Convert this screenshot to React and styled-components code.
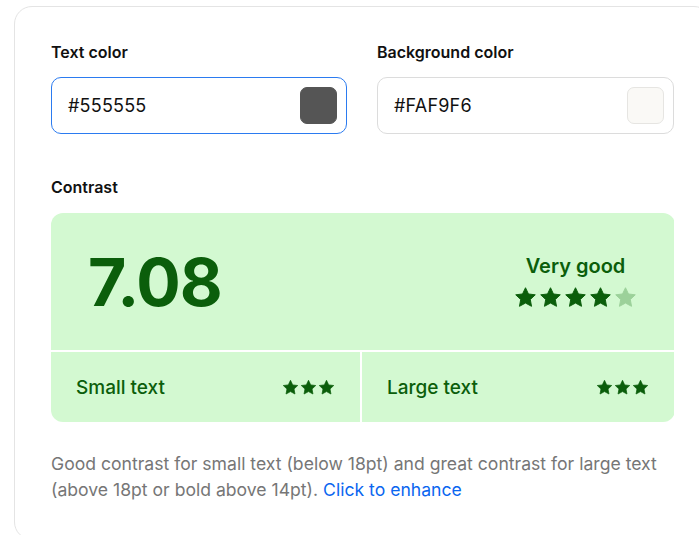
import React from "react";
import styled, { createGlobalStyle } from "styled-components";

const GlobalStyle = createGlobalStyle`
  html, body {
    margin: 0;
    padding: 0;
    background: #ffffff;
    overflow: hidden;
  }
  body {
    font-family: Inter, "Noto Sans", "Liberation Sans", sans-serif;
    color: #111;
  }
`;

const Page = styled.div`
  padding: 6px 0 0 14px;
`;

const Card = styled.div`
  box-sizing: border-box;
  width: 698px;
  border: 1px solid #e4e4e4;
  border-radius: 18px;
  padding: 35px 36px 36px;
  background: #fff;
`;

const Fields = styled.div`
  display: grid;
  grid-template-columns: 296px 297px;
  column-gap: 30px;
`;

const Field = styled.div`
  display: flex;
  flex-direction: column;
  gap: 15px;
`;

const Label = styled.div`
  font-size: 16px;
  line-height: 20px;
  font-weight: 600;
  color: #111;
`;

const InputBox = styled.div`
  box-sizing: border-box;
  height: 57px;
  display: flex;
  align-items: center;
  justify-content: space-between;
  padding: 0 9px 0 16px;
  border-radius: 10px;
  border: ${(p) => (p.$focused ? "1.5px solid #2b7bf0" : "1px solid #dcdcdc")};
  background: #fff;
`;

const HexValue = styled.span`
  font-size: 18px;
  color: #111;
  letter-spacing: 0.2px;
`;

const Swatch = styled.span`
  box-sizing: border-box;
  width: 37px;
  height: 37px;
  border-radius: 7px;
  background: ${(p) => p.$color};
  border: 1px solid ${(p) => (p.$light ? "#e6e5e2" : p.$color)};
`;

const ContrastSection = styled.div`
  margin-top: 43px;
  display: flex;
  flex-direction: column;
  gap: 16px;
`;

const ResultGrid = styled.div`
  display: grid;
  grid-template-columns: 309px 312px;
  grid-template-rows: 137px 70px;
  gap: 2px;
  border-radius: 12px;
  overflow: hidden;
  background: #fff;
`;

const Cell = styled.div`
  background: #d3f9d1;
  color: #0b5e0b;
  display: flex;
  align-items: center;
  justify-content: space-between;
`;

const Summary = styled(Cell)`
  grid-column: 1 / span 2;
  padding: 0 37px;
`;

const Ratio = styled.div`
  font-size: 66px;
  font-weight: 700;
  letter-spacing: -1px;
  line-height: 1;
`;

const Verdict = styled.div`
  display: flex;
  flex-direction: column;
  align-items: center;
  gap: 8px;
`;

const VerdictText = styled.div`
  font-size: 20px;
  font-weight: 600;
  line-height: 24px;
`;

const Stars = styled.div`
  display: flex;
  gap: ${(p) => p.$gap}px;
`;

const Detail = styled(Cell)`
  padding: 0 25px;
`;

const DetailText = styled.div`
  font-size: 19px;
  font-weight: 500;
`;

const Note = styled.p`
  margin: 29px 0 0;
  font-size: 17.6px;
  line-height: 26px;
  color: #767676;
`;

const Link = styled.a`
  color: #0a66f0;
  text-decoration: none;
  cursor: pointer;
`;

const Star = ({ size, faded }) => (
  <svg width={size} height={size} viewBox="0 0 24 24">
    <polygon
      points="12,1.8 15.1,8.3 22.2,9.2 17,14.1 18.3,21.2 12,17.8 5.7,21.2 7,14.1 1.8,9.2 8.9,8.3"
      fill={faded ? "#9cd19a" : "#0b5e0b"}
      stroke={faded ? "#9cd19a" : "#0b5e0b"}
      strokeWidth="1"
      strokeLinejoin="round"
    />
  </svg>
);

const StarRow = ({ count, filled, size, gap }) => (
  <Stars $gap={gap}>
    {Array.from({ length: count }).map((_, i) => (
      <Star key={i} size={size} faded={i >= filled} />
    ))}
  </Stars>
);

export default function App() {
  return (
    <Page>
      <GlobalStyle />
      <Card>
        <Fields>
          <Field>
            <Label>Text color</Label>
            <InputBox $focused>
              <HexValue>#555555</HexValue>
              <Swatch $color="#555555" />
            </InputBox>
          </Field>
          <Field>
            <Label>Background color</Label>
            <InputBox>
              <HexValue>#FAF9F6</HexValue>
              <Swatch $color="#FAF9F6" $light />
            </InputBox>
          </Field>
        </Fields>

        <ContrastSection>
          <Label>Contrast</Label>
          <ResultGrid>
            <Summary>
              <Ratio>7.08</Ratio>
              <Verdict>
                <VerdictText>Very good</VerdictText>
                <StarRow count={5} filled={4} size={23} gap={2} />
              </Verdict>
            </Summary>
            <Detail>
              <DetailText>Small text</DetailText>
              <StarRow count={3} filled={3} size={17} gap={1} />
            </Detail>
            <Detail>
              <DetailText>Large text</DetailText>
              <StarRow count={3} filled={3} size={17} gap={1} />
            </Detail>
          </ResultGrid>
        </ContrastSection>

        <Note>
          Good contrast for small text (below 18pt) and great contrast for large text
          (above 18pt or bold above 14pt). <Link>Click to enhance</Link>
        </Note>
      </Card>
    </Page>
  );
}
